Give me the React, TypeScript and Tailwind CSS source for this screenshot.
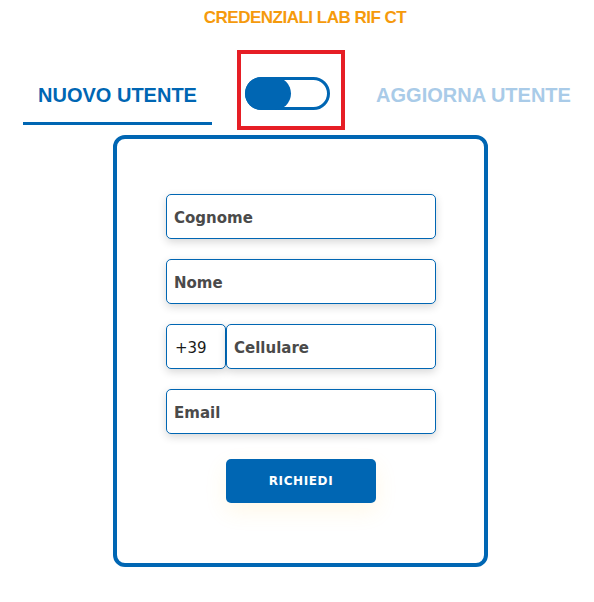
import React from "react";

const sans = { fontFamily: '"Liberation Sans", Arial, sans-serif' };
const dv = { fontFamily: '"DejaVu Sans", Verdana, sans-serif' };

function Field({ label, className = "" }: { label: string; className?: string }) {
  return (
    <div
      className={`h-[45px] border border-[#0066b3] rounded-[5px] bg-white shadow-[0_3px_8px_rgba(0,0,0,0.16)] flex items-center pl-[7px] pt-[3px] text-[15px] font-bold text-[#4a4a4a] ${className}`}
      style={dv}
    >
      {label}
    </div>
  );
}

export default function App() {
  return (
    <div className="w-[594px] h-[602px] bg-white overflow-hidden">
      <div
        className="pt-[8px] pl-[16px] text-center text-[17px] leading-[20px] font-bold tracking-[-0.5px] text-[#f59a0c]"
        style={sans}
      >
        CREDENZIALI LAB RIF CT
      </div>

      <div className="flex mt-[22px] pl-[23px]" style={sans}>
        <div className="w-[189px] flex flex-col items-center pt-[33px]">
          <div className="text-[20px] leading-[24px] font-bold text-[#0066b3]">
            NUOVO UTENTE
          </div>
          <div className="mt-[15px] w-full h-[3px] bg-[#0066b3]" />
        </div>

        <div className="ml-[25px] w-[108px] h-[80px] border-4 border-[#e61e25] pl-[4px] pt-[23px]">
          <div className="relative w-[85px] h-[33px] rounded-full border-[3px] border-[#0066b3] bg-white">
            <div className="absolute -left-[3px] -top-[3px] w-[46px] h-[33px] rounded-full bg-[#0066b3]" />
          </div>
        </div>

        <div className="ml-[29px] w-[199px] pt-[33px] text-center text-[20px] leading-[24px] font-bold text-[#a9cbe8]">
          AGGIORNA UTENTE
        </div>
      </div>

      <div className="mt-[5px] ml-[113px] w-[375px] h-[432px] border-4 border-[#0066b3] rounded-[12px] pl-[49px] pt-[55px] flex flex-col gap-[20px]">
        <Field label="Cognome" className="w-[270px]" />
        <Field label="Nome" className="w-[270px]" />
        <div className="flex w-[270px]">
          <div
            className="w-[60px] h-[45px] border border-[#0066b3] rounded-[5px] bg-white shadow-[0_3px_8px_rgba(0,0,0,0.16)] flex items-center pl-[8px] pt-[3px] text-[15px] text-[#1a1a1a]"
            style={dv}
          >
            +39
          </div>
          <Field label="Cellulare" className="w-[210px]" />
        </div>
        <Field label="Email" className="w-[270px]" />
        <button
          className="mt-[5px] ml-[60px] w-[150px] h-[44px] rounded-[5px] bg-[#0066b3] text-white text-[12px] font-bold tracking-[0.6px] shadow-[0_8px_22px_rgba(255,200,60,0.12)] flex items-center justify-center"
          style={dv}
        >
          RICHIEDI
        </button>
      </div>
    </div>
  );
}
